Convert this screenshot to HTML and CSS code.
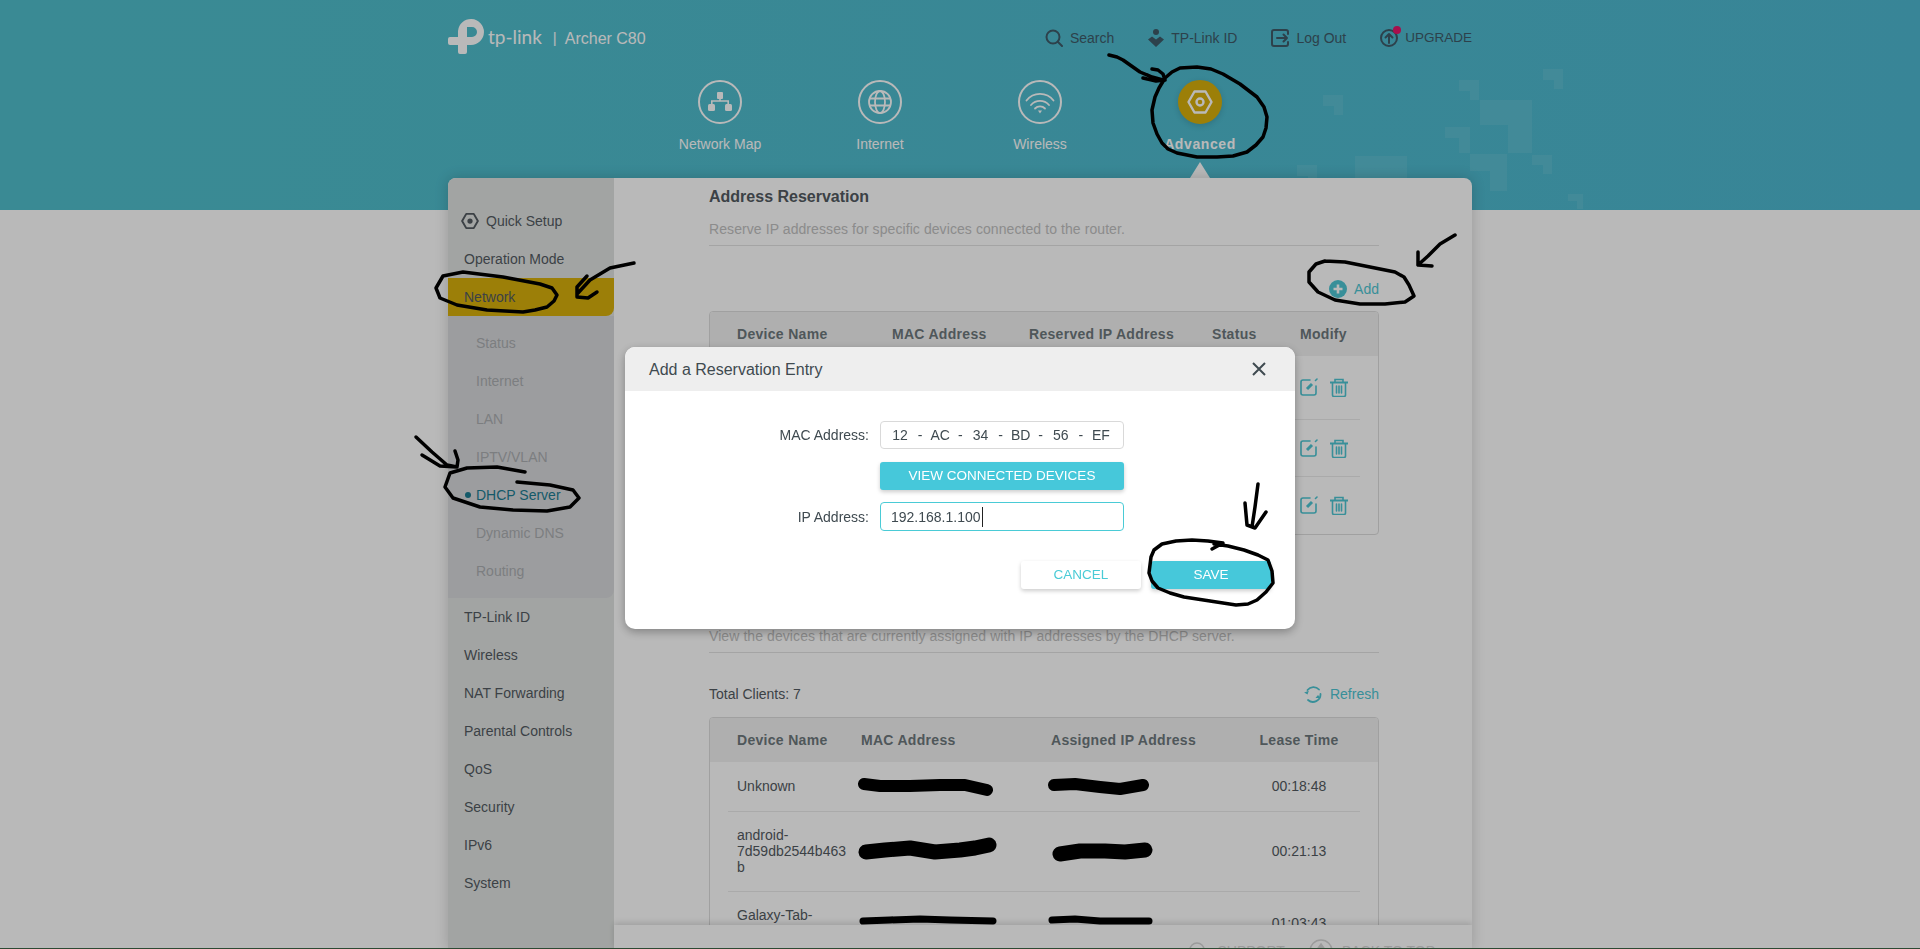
FILE: index.html
```html
<!DOCTYPE html>
<html lang="en">
<head>
    <meta charset="UTF-8">
    <title>Archer C80 - DHCP Server</title>
    <link rel="stylesheet" href="styles.css">
</head>
<body>
    <header class="header">
        <svg class="decor" viewBox="0 0 1920 210">
            <path d="M1323 95h20v20h-9v-9h-11z"/>
            <path d="M1459 80h20v20h-9v-9h-11z"/>
            <path d="M1543 69h20v20h-9v-9h-11z"/>
            <path d="M1480 100h52v53h-24v-28h-28z"/>
            <path d="M1445 127h25v26h-11v-15h-14z"/>
            <path d="M1470 154h37v37h-17v-20h-20z"/>
            <path d="M1532 155h20v19h-9v-9h-11z"/>
            <path d="M1568 194h15v15h-6v-8h-9z"/>
            <path d="M1355 156h52v54h-52z"/>
            <path d="M1297 165h20v20h-9v-9h-11z"/>
        </svg>
        <div class="header-inner">
            <div class="top-row">
                <div class="brand">
                    <svg class="brand-logo" viewBox="0 0 36 36">
                        <path fill-rule="evenodd" d="M10 13A13 13 0 1 1 23 27h-4v7a2 2 0 0 1-2 2h-5a2 2 0 0 1-2-2v-7H2a2 2 0 0 1-2-2v-4a2 2 0 0 1 2-2h8zM19 9v10h5a5 5 0 0 0 0-10z"/>
                    </svg>
                    <span class="brand-name">tp-link</span>
                    <span class="brand-sep">|</span>
                    <span class="brand-model">Archer C80</span>
                </div>
                <nav class="top-links">
                    <a class="top-link">
                        <svg width="18" height="18" viewBox="0 0 18 18" fill="none" stroke="currentColor" stroke-width="2" stroke-linecap="round"><circle cx="8" cy="8" r="6.5"/><path d="M13 13l4 4"/></svg>
                        Search
                    </a>
                    <a class="top-link">
                        <svg width="16" height="18" viewBox="0 0 16 18" fill="currentColor"><circle cx="8" cy="3" r="3"/><path d="M0 10.5L4 7.500l4 3 4-3 4 3L8 18z"/></svg>
                        TP-Link ID
                    </a>
                    <a class="top-link">
                        <svg width="18" height="18" viewBox="0 0 18 18" fill="none" stroke="currentColor" stroke-width="2" stroke-linecap="round" stroke-linejoin="round"><path d="M17 5V3a2 2 0 0 0-2-2H3a2 2 0 0 0-2 2v12a2 2 0 0 0 2 2h12a2 2 0 0 0 2-2v-2"/><path d="M6 9h10M12.500 5.500L16 9l-3.500 3.500"/></svg>
                        Log Out
                    </a>
                    <a class="top-link upgrade">
                        <svg width="18" height="18" viewBox="0 0 18 18" fill="none" stroke="currentColor" stroke-width="2" stroke-linecap="round" stroke-linejoin="round"><circle cx="9" cy="9" r="8"/><path d="M9 14V5M5.500 8.500L9 5l3.500 3.500"/></svg>
                        UPGRADE
                    </a>
                </nav>
            </div>
            <nav class="main-nav">
                <a class="nav-item">
                    <span class="nav-circle">
                        <svg viewBox="0 0 44 44" fill="currentColor"><rect x="19" y="12" width="6" height="7" rx="1"/><path d="M21.200 18h1.600v2.200H31V25h-1.600v-3.200H14.600V25H13v-4.800h8.200z"/><rect x="10" y="24" width="7" height="7" rx="1.500"/><rect x="27" y="24" width="7" height="7" rx="1.500"/></svg>
                    </span>
                    <span>Network Map</span>
                </a>
                <a class="nav-item">
                    <span class="nav-circle">
                        <svg viewBox="0 0 44 44" fill="none" stroke="currentColor" stroke-width="1.800"><circle cx="22" cy="22" r="11"/><ellipse cx="22" cy="22" rx="5" ry="11"/><path d="M11.500 18.500h21M11.500 25.500h21"/></svg>
                    </span>
                    <span>Internet</span>
                </a>
                <a class="nav-item">
                    <span class="nav-circle">
                        <svg viewBox="0 0 44 44" fill="none" stroke="currentColor" stroke-width="1.800" stroke-linecap="round"><path d="M8.500 20.500A17 17 0 0 1 35.500 20.500"/><path d="M13 25A12 12 0 0 1 31 25"/><path d="M17 28.500A7 7 0 0 1 27 28.500"/><path d="M20 30.500h4l-2 3z" fill="currentColor" stroke="none"/></svg>
                    </span>
                    <span>Wireless</span>
                </a>
                <a class="nav-item active">
                    <span class="nav-circle">
                        <svg viewBox="0 0 44 44" fill="none" stroke="currentColor" stroke-width="2.400" stroke-linejoin="round"><path d="M16.500 11.500h11L33.500 22l-6 10.500h-11L10.500 22z"/><circle cx="22" cy="22" r="3.500"/></svg>
                    </span>
                    <span>Advanced</span>
                </a>
            </nav>
        </div>
    </header>

    <div class="card">
        <aside class="sidebar">
            <a class="side-item quick">
                <svg width="18" height="18" viewBox="0 0 24 24" fill="none" stroke="currentColor" stroke-width="2.600" stroke-linejoin="round"><path d="M7 2.500h10L22.500 12 17 21.500H7L1.500 12z"/><circle cx="12" cy="12" r="3.500" fill="currentColor" stroke="none"/></svg>
                Quick Setup
            </a>
            <a class="side-item">Operation Mode</a>
            <a class="side-item selected">Network</a>
            <div class="submenu">
                <a class="sub-item">Status</a>
                <a class="sub-item">Internet</a>
                <a class="sub-item">LAN</a>
                <a class="sub-item">IPTV/VLAN</a>
                <a class="sub-item current">DHCP Server</a>
                <a class="sub-item">Dynamic DNS</a>
                <a class="sub-item">Routing</a>
            </div>
            <a class="side-item">TP-Link ID</a>
            <a class="side-item">Wireless</a>
            <a class="side-item">NAT Forwarding</a>
            <a class="side-item">Parental Controls</a>
            <a class="side-item">QoS</a>
            <a class="side-item">Security</a>
            <a class="side-item">IPv6</a>
            <a class="side-item">System</a>
        </aside>

        <main class="main">
            <div class="content">
                <h2 class="title">Address Reservation</h2>
                <p class="desc">Reserve IP addresses for specific devices connected to the router.</p>
                <div class="tools tools-add">
                    <a class="tool">
                        <svg width="18" height="18" viewBox="0 0 18 18"><circle cx="9" cy="9" r="9" fill="currentColor"/><path d="M9 4.500v9M4.500 9h9" stroke="#fff" stroke-width="2.600"/></svg>
                        Add
                    </a>
                </div>
                <div class="table-box">
                    <div class="row head reserve-cols">
                        <span>Device Name</span><span>MAC Address</span><span>Reserved IP Address</span><span>Status</span><span>Modify</span>
                    </div>
                    <div class="row reserve-row tall">
                        <span class="modify">
                            <svg width="18" height="18" viewBox="0 0 18 18" fill="none" stroke="currentColor" stroke-width="1.600" stroke-linecap="round"><path d="M10 2H3a2 2 0 0 0-2 2v11a2 2 0 0 0 2 2h11a2 2 0 0 0 2-2V8"/><path d="M7 11l5-5" stroke-width="3" stroke-linecap="butt"/><path d="M15.500 2.500L17 1"/></svg>
                            <svg width="18" height="19" viewBox="0 0 18 19" fill="none" stroke="currentColor" stroke-width="1.600" stroke-linecap="round"><path d="M0 4.500h18" stroke-width="2"/><path d="M5 4V1.500h8V4"/><path d="M2.500 5v12a1.500 1.500 0 0 0 1.500 1.500h10a1.500 1.500 0 0 0 1.500-1.500V5"/><path d="M6.500 8v7M9 8v7M11.500 8v7"/></svg>
                        </span>
                    </div>
                    <div class="row reserve-row">
                        <span class="modify">
                            <svg width="18" height="18" viewBox="0 0 18 18" fill="none" stroke="currentColor" stroke-width="1.600" stroke-linecap="round"><path d="M10 2H3a2 2 0 0 0-2 2v11a2 2 0 0 0 2 2h11a2 2 0 0 0 2-2V8"/><path d="M7 11l5-5" stroke-width="3" stroke-linecap="butt"/><path d="M15.500 2.500L17 1"/></svg>
                            <svg width="18" height="19" viewBox="0 0 18 19" fill="none" stroke="currentColor" stroke-width="1.600" stroke-linecap="round"><path d="M0 4.500h18" stroke-width="2"/><path d="M5 4V1.500h8V4"/><path d="M2.500 5v12a1.500 1.500 0 0 0 1.500 1.500h10a1.500 1.500 0 0 0 1.500-1.500V5"/><path d="M6.500 8v7M9 8v7M11.500 8v7"/></svg>
                        </span>
                    </div>
                    <div class="row reserve-row last">
                        <span class="modify">
                            <svg width="18" height="18" viewBox="0 0 18 18" fill="none" stroke="currentColor" stroke-width="1.600" stroke-linecap="round"><path d="M10 2H3a2 2 0 0 0-2 2v11a2 2 0 0 0 2 2h11a2 2 0 0 0 2-2V8"/><path d="M7 11l5-5" stroke-width="3" stroke-linecap="butt"/><path d="M15.500 2.500L17 1"/></svg>
                            <svg width="18" height="19" viewBox="0 0 18 19" fill="none" stroke="currentColor" stroke-width="1.600" stroke-linecap="round"><path d="M0 4.500h18" stroke-width="2"/><path d="M5 4V1.500h8V4"/><path d="M2.500 5v12a1.500 1.500 0 0 0 1.500 1.500h10a1.500 1.500 0 0 0 1.500-1.500V5"/><path d="M6.500 8v7M9 8v7M11.500 8v7"/></svg>
                        </span>
                    </div>
                </div>

                <p class="desc desc-clients">View the devices that are currently assigned with IP addresses by the DHCP server.</p>
                <div class="tools tools-clients">
                    <span>Total Clients: 7</span>
                    <a class="tool refresh">
                        <svg width="18" height="18" viewBox="0 0 18 18" fill="none" stroke="currentColor" stroke-width="1.800" stroke-linecap="round"><path d="M3.500 5A7.500 7.500 0 0 1 15 4.500"/><path d="M16.500 9A7.500 7.500 0 0 1 4 15"/><path d="M0.500 6.500h5L3 9.500z" fill="currentColor" stroke="none" transform="rotate(-20 3 8)"/><path d="M12.500 11h5L15 8z" fill="currentColor" stroke="none" transform="translate(-1 2)"/></svg>
                        Refresh
                    </a>
                </div>
                <div class="table-box">
                    <div class="row head client-cols">
                        <span>Device Name</span><span>MAC Address</span><span>Assigned IP Address</span><span class="centered">Lease Time</span>
                    </div>
                    <div class="row client-cols">
                        <span>Unknown</span><span></span><span></span><span class="centered">00:18:48</span>
                    </div>
                    <div class="row client-cols">
                        <span>android-7d59db2544b463b</span><span></span><span></span><span class="centered">00:21:13</span>
                    </div>
                    <div class="row client-cols">
                        <span>Galaxy-Tab-<br>A</span><span></span><span></span><span class="centered">01:03:43</span>
                    </div>
                </div>
            </div>
            <footer class="footer">
                <a class="foot-link">
                    <svg width="22" height="24" viewBox="0 0 22 24" fill="none" stroke="currentColor" stroke-width="1.500"><path d="M4 14v-3a7 7 0 0 1 14 0v3"/><rect x="1" y="12" width="4" height="7" rx="1.500"/><rect x="17" y="12" width="4" height="7" rx="1.500"/></svg>
                    SUPPORT
                </a>
                <a class="foot-link">
                    <svg width="24" height="24" viewBox="0 0 24 24" fill="none" stroke="currentColor" stroke-width="1.500"><circle cx="12" cy="12" r="11"/><path d="M12 5l5 7H7z" fill="currentColor"/></svg>
                    BACK TO TOP
                </a>
            </footer>
        </main>
    </div>

    <div class="mask">
        <div class="dialog">
            <div class="dialog-head">
                <span class="dialog-title">Add a Reservation Entry</span>
                <svg width="14" height="14" viewBox="0 0 14 14" stroke="#3f4a50" stroke-width="2"><path d="M1 1l12 12M13 1L1 13"/></svg>
            </div>
            <div class="dialog-body">
                <div class="form-row">
                    <label class="form-label">MAC Address:</label>
                    <div class="field mac-field">
                        <span>12</span><span>-</span><span>AC</span><span>-</span><span>34</span><span>-</span><span>BD</span><span>-</span><span>56</span><span>-</span><span>EF</span>
                    </div>
                </div>
                <div class="form-row">
                    <span class="form-label"></span>
                    <button class="btn wide">VIEW CONNECTED DEVICES</button>
                </div>
                <div class="form-row">
                    <label class="form-label">IP Address:</label>
                    <div class="field focused"><span class="caret">192.168.1.100</span></div>
                </div>
                <div class="dialog-actions">
                    <button class="btn plain">CANCEL</button>
                    <button class="btn">SAVE</button>
                </div>
            </div>
        </div>
    </div>

    <!-- pen marks drawn on the screenshot -->
    <svg class="marks" viewBox="0 0 1920 949" fill="none" stroke="#000" stroke-width="3.500" stroke-linecap="round" stroke-linejoin="round">
        <path d="M1109 55L1117 57 1123 60 1140 72 1152 77 1163 80M1152 69L1158 70 1163 74 1165 80 1156 81 1143 78"/>
        <path d="M1165 78L1172 72 1180 68 1197 67 1211 69 1223 74 1240 84 1257 97 1264 107 1267 117 1266 128 1263 137 1256 145 1247 152 1233 156 1217 157 1197 157 1177 153 1168 149 1162 143 1157 134 1153 123 1152 110 1155 97 1159 88 1165 78"/>
        <path d="M1325 261L1345 262 1370 267 1395 272 1404 277 1409 285 1414 296 1405 302 1385 304 1360 304 1335 300 1318 292 1309 282 1309 272 1316 264 1325 261"/>
        <path d="M1455 235L1440 244 1428 256 1418 265M1418 252V265L1432 266"/>
        <path d="M463 272L503 277 540 284 552 288 557 295 554 301 547 307 535 310 523 312 487 310 457 305 440 298 436 288 443 276 463 272"/>
        <path d="M634 263L610 268 590 280 578 293M587 276L577 287V297L588 298 597 292"/>
        <path d="M525 472L497 467 467 468 450 473 445 487 453 498 480 507 513 510 547 511 570 507 579 498 573 490 550 485 517 482"/>
        <path d="M416 437L432 452 447 465 457 467M422 455L440 466 457 467M455 451L458 460 457 467"/>
        <path d="M1212 549L1223 543 1208 541 1192 540 1176 541 1162 544 1154 550 1151 557 1149 573 1152 581 1158 588 1170 593 1184 597 1210 601 1236 605 1248 604 1257 600 1266 592 1273 583 1272 571 1268 560 1258 555 1244 550 1228 546 1214 544"/>
        <path d="M1258 484L1255 507 1252 527M1245 503L1247 525 1255 528 1266 512"/>
        <g stroke-width="12">
            <path d="M864 784L880 786 910 786 940 785 965 785 987 790"/>
            <path d="M1054 785L1075 784 1100 787 1120 789 1143 785"/>
        </g>
        <g stroke-width="15">
            <path d="M866 852L885 850 910 848 935 852 960 850 975 848 989 845"/>
            <path d="M1060 854L1080 851 1105 851 1125 852 1145 850"/>
        </g>
        <g stroke-width="7">
            <path d="M863 921L890 920 920 919 950 920 993 921"/>
            <path d="M1052 920L1075 919 1100 921 1149 921"/>
        </g>
    </svg>
    <div class="screen-edge"></div>
</body>
</html>
```

FILE: styles.css
```css
* {
    box-sizing: border-box;
}

html, body {
    margin: 0;
    height: 100%;
    overflow: hidden;
}

body {
    font-family: "Liberation Sans", Arial, sans-serif;
    font-size: 14px;
    line-height: 20px;
    color: #535a61;
    background: #fff;
}

/* header */
.header {
    position: relative;
    height: 210px;
    padding-top: 18px;
    background: linear-gradient(90deg, #50bfcc, #4eb8d0);
}

.decor {
    position: absolute;
    top: 0;
    left: 0;
    width: 1920px;
    height: 210px;
    fill: rgba(255, 255, 255, 0.08);
}

.header-inner {
    position: relative;
    width: 1024px;
    margin: 0 auto;
}

.top-row {
    display: flex;
    justify-content: space-between;
    height: 36px;
}

.brand {
    display: flex;
    align-items: center;
    color: #fff;
}

.brand-logo {
    width: 36px;
    height: 36px;
    fill: #fff;
}

.brand-name {
    margin: 2px 0 0 4px;
    font-family: Lato, sans-serif;
    font-size: 19px;
    font-weight: 400;
}

.brand-sep {
    margin: 4px 8px 0 11px;
    font-size: 15px;
}

.brand-model {
    margin-top: 5px;
    font-size: 16px;
}

.top-links {
    display: flex;
    align-items: center;
    gap: 34px;
    padding-top: 4px;
    color: #3e5a68;
}

.top-link {
    display: flex;
    align-items: center;
    gap: 7px;
}

.upgrade {
    position: relative;
    font-size: 13.5px;
}

.upgrade::after {
    content: "";
    position: absolute;
    top: -2px;
    left: 13px;
    width: 8px;
    height: 8px;
    border-radius: 50%;
    background: #e6156a;
}

.main-nav {
    display: flex;
    justify-content: center;
    margin-top: 26px;
}

.nav-item {
    position: relative;
    display: flex;
    flex-direction: column;
    align-items: center;
    gap: 10px;
    width: 160px;
    color: #fff;
}

.nav-circle {
    width: 44px;
    height: 44px;
    border: 2px solid #fff;
    border-radius: 50%;
}

.nav-circle svg {
    display: block;
    width: 44px;
    height: 44px;
    margin: -2px;
}

.nav-item.active {
    font-weight: bold;
    letter-spacing: 0.6px;
}

.nav-item.active .nav-circle {
    border-color: #d8b00c;
    background: #d8b00c;
    box-shadow: 0 2px 6px rgba(0, 0, 0, 0.15);
}

.nav-item.active::after {
    content: "";
    position: absolute;
    top: 100%;
    left: 70px;
    margin-top: 8px;
    border-left: 10px solid transparent;
    border-right: 10px solid transparent;
    border-bottom: 16px solid #fff;
}

/* card */
.card {
    position: relative;
    display: flex;
    width: 1024px;
    height: 771px;
    margin: -32px auto 0;
    background: #fff;
    border-radius: 8px 8px 0 0;
    box-shadow: 0 0 14px rgba(0, 0, 0, 0.18);
    overflow: hidden;
}

.sidebar {
    flex: none;
    width: 166px;
    padding-top: 24px;
    background: #e0e3e1;
}

.side-item {
    display: flex;
    align-items: center;
    height: 38px;
    padding-left: 16px;
}

.quick {
    gap: 7px;
    padding-left: 13px;
}

.selected {
    background: #d8b00c;
    border-radius: 0 0 8px 0;
}

.submenu {
    padding: 8px 0;
    background: #d8d9dc;
    border-radius: 0 0 8px 0;
}

.sub-item {
    position: relative;
    display: flex;
    align-items: center;
    height: 38px;
    padding-left: 28px;
    color: #abaeb1;
}

.sub-item.current {
    color: #1c7c91;
}

.sub-item.current::before {
    content: "";
    position: absolute;
    left: 17px;
    top: 16px;
    width: 6px;
    height: 6px;
    border-radius: 50%;
    background: #1c7c91;
}

.main {
    flex: 1;
    display: flex;
    flex-direction: column;
    min-width: 0;
}

.content {
    flex: 1;
    min-height: 0;
    padding: 9px 93px 0 95px;
    overflow: hidden;
}

.title {
    margin: 0;
    font-size: 16px;
    line-height: 20px;
    font-weight: bold;
}

.desc {
    margin: 12px 0 0;
    padding-bottom: 6px;
    letter-spacing: 0.08px;
    color: #c1c1c1;
    border-bottom: 1px solid #e3e3e3;
}

.desc-clients {
    margin-top: 91px;
}

.tools {
    display: flex;
    align-items: center;
    justify-content: flex-end;
}

.tools-add {
    margin: 33px 0 12px;
}

.tools-clients {
    justify-content: space-between;
    margin: 31px 0 13px;
}

.tool {
    display: flex;
    align-items: center;
    gap: 7px;
    color: #4ec6d3;
}

.refresh {
    gap: 8px;
}

.table-box {
    border: 1px solid #ddd;
    border-radius: 4px;
    overflow: hidden;
}

.row {
    display: grid;
    align-items: center;
    margin: 0 18px;
    line-height: 16px;
    border-bottom: 1px solid #ebebeb;
}

.row > span {
    padding-left: 9px;
    overflow-wrap: anywhere;
}

.row.head {
    height: 44px;
    margin: 0;
    padding: 0 18px;
    font-weight: bold;
    letter-spacing: 0.3px;
    color: #6e787c;
    background: #f2f2f2;
    border-bottom: 0;
}

.reserve-cols {
    grid-template-columns: 155px 137px 183px 88px 69px;
}

.reserve-row {
    grid-template-columns: 155px 137px 183px 88px 69px;
    height: 57px;
}

.reserve-row.tall {
    height: 64px;
}

.reserve-row.last {
    border-bottom: 0;
}

.modify {
    grid-column: 5;
    display: flex;
    gap: 12px;
    color: #4ec6d3;
}

.client-cols {
    grid-template-columns: 124px 190px 196px 122px;
    padding: 15px 0 16px;
}

.client-cols:nth-child(2) {
    padding: 16px 0 17px;
}

.row > .centered {
    padding-left: 0;
    text-align: center;
}

.footer {
    position: relative;
    flex: none;
    display: flex;
    justify-content: flex-end;
    gap: 24px;
    height: 24px;
    padding: 14px 37px 0 0;
    background: #fff;
    color: #d6d6d6;
    box-shadow: 0 -2px 6px rgba(0, 0, 0, 0.15);
    overflow: hidden;
}

.foot-link {
    display: flex;
    align-items: center;
    flex: none;
    gap: 9px;
    height: 24px;
}

/* dialog */
.mask {
    position: fixed;
    inset: 0;
    display: flex;
    justify-content: center;
    align-items: flex-start;
    padding-top: 347px;
    background: rgba(0, 0, 0, 0.275);
}

.dialog {
    width: 670px;
    background: #fff;
    border-radius: 10px;
    box-shadow: 0 3px 10px rgba(0, 0, 0, 0.3);
    overflow: hidden;
    color: #3f4a50;
}

.dialog-head {
    display: flex;
    align-items: center;
    justify-content: space-between;
    height: 44px;
    padding: 0 29px 0 24px;
    font-size: 16px;
    background: #eee;
}

.dialog-title {
    padding-top: 2px;
}

.dialog-body {
    padding: 30px 24px 40px 0;
}

.form-row {
    display: flex;
    align-items: center;
    gap: 11px;
    margin-bottom: 12px;
}

.form-row:first-child {
    margin-bottom: 13px;
}

.form-label {
    flex: none;
    width: 244px;
    text-align: right;
}

.field {
    display: flex;
    align-items: center;
    width: 244px;
    height: 28px;
    padding-left: 10px;
    border: 1px solid #d9d9d9;
    border-radius: 4px;
}

.field.focused {
    height: 29px;
    border-color: #4acbd6;
}

.mac-field {
    padding-left: 9px;
}

.mac-field span {
    flex: none;
    width: 20.1px;
    text-align: center;
}

.caret {
    padding-right: 1px;
    border-right: 1px solid #222;
}

.btn {
    width: 120px;
    height: 28px;
    padding: 0;
    font: inherit;
    font-size: 13.5px;
    color: #fff;
    background: #46c8da;
    border: 0;
    border-radius: 3px;
    box-shadow: 0 2px 4px rgba(0, 0, 0, 0.2);
}

.btn.wide {
    width: 244px;
}

.btn.plain {
    color: #4acbd6;
    background: #fff;
}

.dialog-actions {
    display: flex;
    justify-content: flex-end;
    gap: 10px;
    margin-top: 30px;
}

/* annotations on top of everything */
.marks {
    position: fixed;
    top: 0;
    left: 0;
    width: 1920px;
    height: 949px;
}

.screen-edge {
    position: fixed;
    left: 0;
    right: 0;
    bottom: 0;
    height: 1px;
    background: #2d4a33;
}
```
